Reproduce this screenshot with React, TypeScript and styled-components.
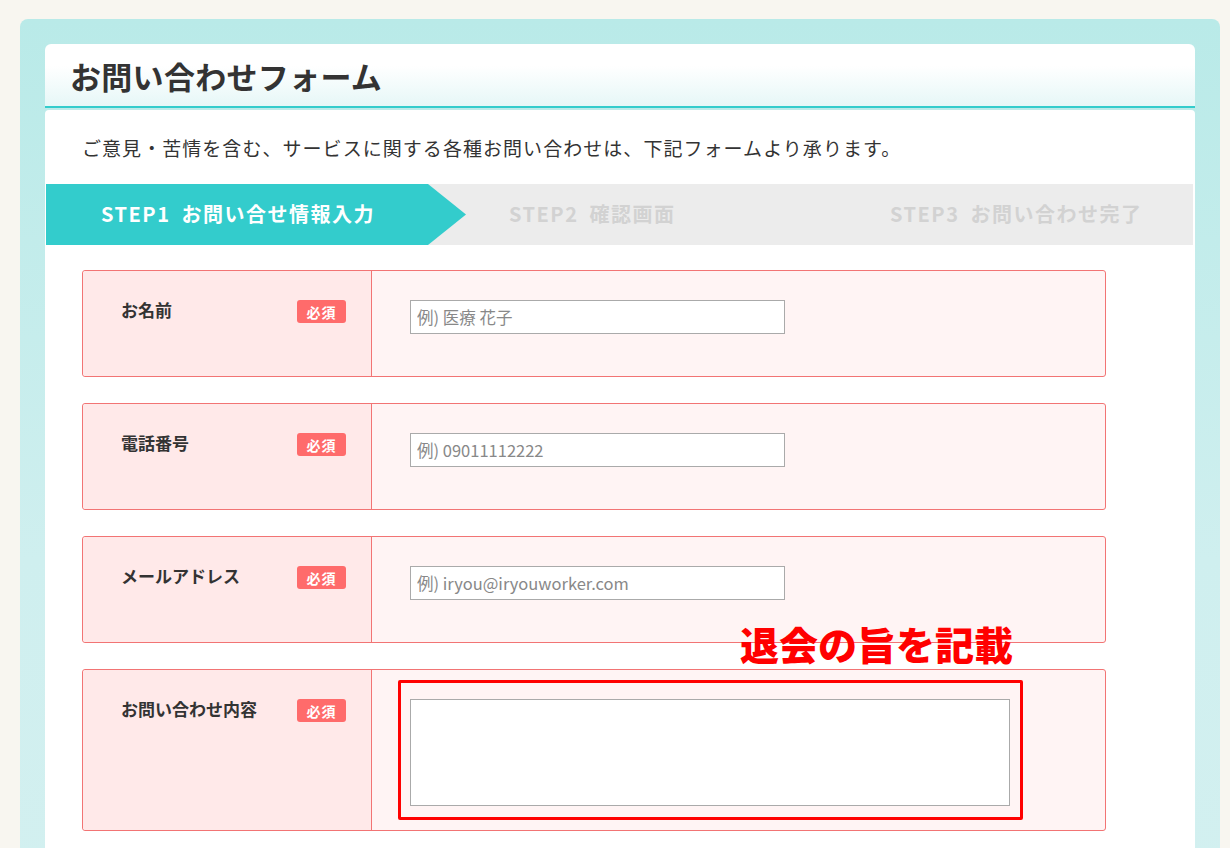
import styled, { createGlobalStyle } from "styled-components";

const GlobalStyle = createGlobalStyle`
  * { box-sizing: border-box; }
  body {
    margin: 0;
    background: #f8f6f0;
    font-family: "Noto Sans CJK JP", "Noto Sans", sans-serif;
    color: #333;
  }
`;

type Field = {
  label: string;
  placeholder?: string;
  multiline?: boolean;
};

const fields: Field[] = [
  { label: "お名前", placeholder: "例) 医療 花子" },
  { label: "電話番号", placeholder: "例) 09011112222" },
  { label: "メールアドレス", placeholder: "例) iryou@iryouworker.com" },
  { label: "お問い合わせ内容", multiline: true },
];

export default function App() {
  return (
    <>
      <GlobalStyle />
      <Page>
        <Panel>
          <HeaderCard>
            <Title>お問い合わせフォーム</Title>
          </HeaderCard>
          <BodyCard>
            <Intro>
              ご意見・苦情を含む、サービスに関する各種お問い合わせは、下記フォームより承ります。
            </Intro>
            <Steps>
              <ActiveStep>STEP1 お問い合せ情報入力</ActiveStep>
              <Step $pad={43}>STEP2 確認画面</Step>
              <Step $pad={0}>STEP3 お問い合わせ完了</Step>
            </Steps>
            <Form>
              {fields.map((f) => (
                <Row key={f.label} $tall={f.multiline}>
                  <LabelCell>
                    <Label>{f.label}</Label>
                    <Badge>必須</Badge>
                  </LabelCell>
                  <InputCell>
                    {f.multiline ? (
                      <NoteWrap>
                        <Note>退会の旨を記載</Note>
                        <Highlight />
                        <TextArea />
                      </NoteWrap>
                    ) : (
                      <TextInput placeholder={f.placeholder} />
                    )}
                  </InputCell>
                </Row>
              ))}
            </Form>
          </BodyCard>
        </Panel>
      </Page>
    </>
  );
}

const Page = styled.div`
  padding: 19px 10px 0 20px;
  height: 848px;
  overflow: hidden;
`;

const Panel = styled.div`
  height: 900px;
  padding: 25px 25px 0 25px;
  border-radius: 8px 8px 0 0;
  background: linear-gradient(180deg, #b9eae8 0%, #cfefef 60%, #d3f0f0 100%);
`;

const HeaderCard = styled.div`
  height: 64px;
  display: flex;
  align-items: center;
  padding-left: 25px;
  border-radius: 6px 6px 0 0;
  background: linear-gradient(180deg, #ffffff 35%, #e6f7f7 100%);
  border-bottom: 2px solid #33cccc;
`;

const Title = styled.h1`
  margin: 0;
  font-size: 31px;
  font-weight: 700;
  color: #333;
  letter-spacing: 0.3px;
`;

const BodyCard = styled.div`
  margin-top: 2px;
  height: 900px;
  background: #fff;
  border-radius: 4px 4px 0 0;
  padding-top: 24px;
`;

const Intro = styled.p`
  margin: 0 0 22px 37px;
  font-size: 19px;
  letter-spacing: 1.05px;
  line-height: 28px;
  color: #333;
`;

const Steps = styled.div`
  margin: 0 2px 0 1px;
  height: 61px;
  display: flex;
  align-items: center;
  background: #ececec;
  font-weight: 700;
  font-size: 20px;
  letter-spacing: 1.5px;
  word-spacing: 5px;
  line-height: 1;
`;

const ActiveStep = styled.div`
  flex: 0 0 420px;
  height: 100%;
  display: flex;
  align-items: center;
  padding-left: 55px;
  padding-bottom: 2px;
  color: #fff;
  background: #33cccc;
  clip-path: polygon(0 0, 382px 0, 100% 50%, 382px 100%, 0 100%);
`;

const Step = styled.div<{ $pad: number }>`
  flex: 0 0 ${(p) => (p.$pad ? "424px" : "auto")};
  padding-left: ${(p) => p.$pad}px;
  padding-bottom: 2px;
  color: #d2d2d2;
`;

const Form = styled.div`
  display: flex;
  flex-direction: column;
  gap: 26px;
  padding: 25px 0 0 37px;
  width: 1061px;
`;

const Row = styled.div<{ $tall?: boolean }>`
  display: grid;
  grid-template-columns: 289px 1fr;
  height: ${(p) => (p.$tall ? "162px" : "107px")};
  border: 1px solid #f27474;
  border-radius: 3px;
  background: #fff4f4;
`;

const LabelCell = styled.div`
  display: flex;
  justify-content: space-between;
  align-items: flex-start;
  padding: 29px 25px 0 38px;
  background: #ffe9e9;
  border-right: 1px solid #f27474;
  border-radius: 3px 0 0 3px;
`;

const Label = styled.span`
  font-size: 17px;
  font-weight: 700;
  line-height: 20px;
  color: #333;
`;

const Badge = styled.span`
  width: 49px;
  height: 23px;
  display: flex;
  align-items: center;
  justify-content: center;
  background: #ff6b6b;
  border-radius: 3px;
  color: #fff;
  font-size: 14px;
  font-weight: 700;
  letter-spacing: 1px;
`;

const InputCell = styled.div`
  padding: 29px 0 0 38px;
`;

const TextInput = styled.input`
  width: 375px;
  height: 34px;
  border: 1px solid #aaa;
  padding: 0 6px;
  font-family: "Noto Sans CJK JP", "Noto Sans", sans-serif;
  font-size: 16.5px;
  color: #333;
  background: #fff;
  outline: none;
  &::placeholder {
    color: #888;
  }
`;

const NoteWrap = styled.div`
  position: relative;
  width: 600px;
  height: 107px;
`;

const TextArea = styled.textarea`
  display: block;
  width: 600px;
  height: 107px;
  border: 1px solid #aaa;
  background: #fff;
  resize: none;
  outline: none;
  position: relative;
`;

const Highlight = styled.div`
  position: absolute;
  top: -19px;
  left: -12px;
  right: -13px;
  bottom: -14px;
  border: 3px solid #ff0000;
  border-radius: 2px;
`;

const Note = styled.div`
  position: absolute;
  left: 330px;
  top: -78px;
  font-size: 39px;
  line-height: 44px;
  font-weight: 900;
  color: #ff0000;
  white-space: nowrap;
  z-index: 2;
`;
